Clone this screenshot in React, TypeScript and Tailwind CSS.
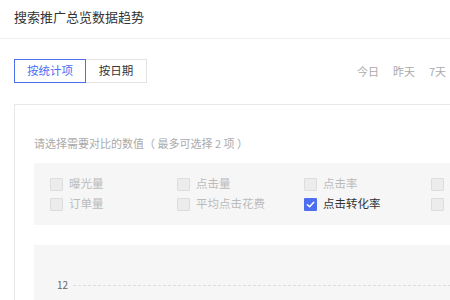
const options = [
    ['曝光量', '订单量'],
    ['点击量', '平均点击花费'],
    ['点击率', '点击转化率'],
    ['', ''],
];

const Check = ({ checked }: { checked?: boolean }) =>
    checked ? (
        <span className="flex h-[13px] w-[13px] items-center justify-center rounded-[1px] bg-[#4e6ef2]">
            <svg width="9" height="9" viewBox="0 0 10 10" fill="none">
                <path d="M1.5 5.2 L4 7.6 L8.6 2.6" stroke="white" strokeWidth="1.6" strokeLinecap="round" strokeLinejoin="round" />
            </svg>
        </span>
    ) : (
        <span className="h-[13px] w-[13px] rounded-[1px] border border-[#dddddd] bg-[#ececec]" />
    );

export default function App() {
    return (
        <div className="h-[300px] w-[450px] overflow-hidden bg-white font-['Noto_Sans_CJK_SC','Noto_Sans',sans-serif]">
            <div className="w-[640px]">
                <div className="flex h-[39px] items-center border-b border-[#eeeeee] px-[14px] pb-[4px]">
                    <span className="text-[13px] text-[#333333]">搜索推广总览数据趋势</span>
                </div>

                <div className="mt-[20px] flex items-center px-[14px]">
                    <div className="flex h-[24px] w-[72px] items-center justify-center border border-[#4e6ef2] text-[11.5px] text-[#4e6ef2]">
                        按统计项
                    </div>
                    <div className="flex h-[24px] w-[61px] items-center justify-center border border-l-0 border-[#e3e3e3] text-[11.5px] text-[#333333]">
                        按日期
                    </div>
                    <div className="ml-[210px] flex gap-[14px] text-[11px] text-[#aaaaaa]">
                        <span>今日</span>
                        <span>昨天</span>
                        <span>7天</span>
                    </div>
                </div>

                <div className="mx-[14px] mt-[21px] border border-[#e8e8e8] px-[19px] pt-[30px]">
                    <div className="h-[16px] text-[11px] leading-[16px] text-[#aaaaaa]">
                        请选择需要对比的数值（ 最多可选择 2 项 ）
                    </div>

                    <div className="mt-[12px] flex bg-[#f6f6f6] py-[11px] pl-[16px]">
                        {options.map((col, i) => (
                            <div key={i} className="flex w-[127px] flex-col">
                                {col.map((label, j) => {
                                    const on = i === 2 && j === 1;
                                    return (
                                        <div key={j} className="flex h-[20px] items-center gap-[6px]">
                                            <Check checked={on} />
                                            <span className={`text-[11.5px] ${on ? 'text-[#333333]' : 'text-[#bbbbbb]'}`}>{label}</span>
                                        </div>
                                    );
                                })}
                            </div>
                        ))}
                    </div>

                    <div className="mt-[20px] h-[80px] bg-[#f6f6f6] pl-[23px] pt-[33px]">
                        <div className="flex items-center gap-[5px]">
                            <span className="text-[10px] leading-[14px] text-[#666666]">12</span>
                            <div className="flex-1 border-t border-dashed border-[#dddddd]" />
                        </div>
                    </div>
                </div>
            </div>
        </div>
    );
}
